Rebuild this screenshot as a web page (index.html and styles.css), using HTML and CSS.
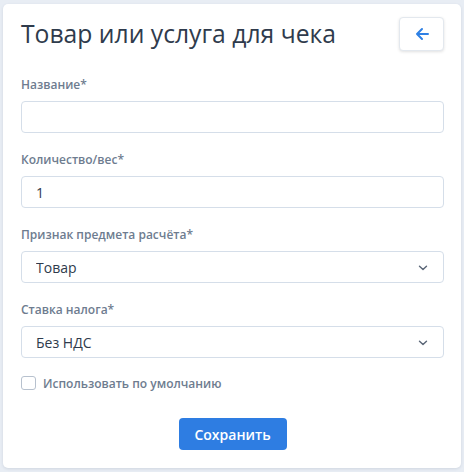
FILE: index.html
```html
<!DOCTYPE html>
<html lang="ru">
  <head>
    <meta charset="UTF-8" />
    <meta name="viewport" content="width=device-width, initial-scale=1.0" />
    <title>Товар или услуга для чека</title>
    <link rel="stylesheet" href="styles.css">
  </head>
  <body>
    <div class="card">
      <div class="card-header">
        <h1>Товар или услуга для чека</h1>
        <button class="back-btn" type="button" aria-label="Назад">
          <svg width="14" height="14" viewBox="0 0 14 14" fill="none" stroke="currentColor" stroke-width="2" stroke-linecap="round" stroke-linejoin="round">
            <path d="M13 7H2M7 2L2 7l5 5" />
          </svg>
        </button>
      </div>

      <div class="field">
        <label for="name">Название*</label>
        <input type="text" id="name" />
      </div>

      <div class="field">
        <label for="qty">Количество/вес*</label>
        <input type="text" id="qty" value="1" />
      </div>

      <div class="field">
        <label for="subject">Признак предмета расчёта*</label>
        <div class="select">
          <select id="subject">
            <option selected>Товар</option>
            <option>Услуга</option>
          </select>
          <svg class="chevron" width="10" height="6" viewBox="0 0 10 6" fill="none" stroke="currentColor" stroke-width="1.4" stroke-linecap="round" stroke-linejoin="round">
            <path d="M1.5 1.2L5 4.6l3.5-3.4" />
          </svg>
        </div>
      </div>

      <div class="field">
        <label for="tax">Ставка налога*</label>
        <div class="select">
          <select id="tax">
            <option selected>Без НДС</option>
            <option>НДС 20%</option>
          </select>
          <svg class="chevron" width="10" height="6" viewBox="0 0 10 6" fill="none" stroke="currentColor" stroke-width="1.4" stroke-linecap="round" stroke-linejoin="round">
            <path d="M1.5 1.2L5 4.6l3.5-3.4" />
          </svg>
        </div>
      </div>

      <label class="check">
        <input type="checkbox" id="default" />
        <span class="box"></span>
        Использовать по умолчанию
      </label>

      <div class="actions">
        <button class="save-btn" type="button">Сохранить</button>
      </div>
    </div>
  </body>
</html>
```

FILE: styles.css
```css
body {
  margin: 0;
  padding: 4px 3px 5px 3px;
  background-color: #e8edf4;
  font-family: "Open Sans", "Noto Sans", sans-serif;
  color: #2f3b4c;
}

.card {
  background-color: white;
  border-radius: 5px;
  box-shadow: 0 1px 3px rgba(40, 60, 90, 0.12);
  padding: 13px 17px 18px 18px;
}

.card-header {
  display: flex;
  align-items: center;
  justify-content: space-between;
  height: 34px;
  margin-bottom: 25px;
}

.card-header h1 {
  margin: 0;
  font-size: 24.7px;
  font-weight: 400;
  line-height: 34px;
  color: #2f3b4c;
}

.back-btn {
  display: flex;
  align-items: center;
  justify-content: center;
  width: 45px;
  height: 34px;
  padding: 0;
  background-color: white;
  color: #2f80e4;
  border: 1px solid #e3e8ee;
  border-radius: 4px;
  box-shadow: 0 1px 3px rgba(0, 0, 0, 0.12);
  cursor: pointer;
}

.field {
  margin-bottom: 18px;
}

.field label {
  display: block;
  font-size: 12px;
  font-weight: 600;
  line-height: 18px;
  color: #6e7c8f;
  margin-bottom: 7px;
}

.field input[type='text'],
.select select {
  display: block;
  width: 100%;
  box-sizing: border-box;
  height: 32px;
  padding: 0 14px;
  border: 1px solid #d5dee9;
  border-radius: 4px;
  background-color: white;
  font-family: inherit;
  font-size: 14px;
  color: #2f3b4c;
  outline: none;
}

.select {
  position: relative;
}

.select select {
  appearance: none;
  -webkit-appearance: none;
}

.chevron {
  position: absolute;
  right: 16px;
  top: 14px;
  color: #5a6677;
  pointer-events: none;
}

.check {
  display: flex;
  align-items: center;
  height: 14px;
  font-size: 12px;
  font-weight: 600;
  color: #6e7c8f;
  cursor: pointer;
}

.check input {
  display: none;
}

.check .box {
  width: 13px;
  height: 12px;
  border: 1px solid #b7c1ce;
  border-radius: 3px;
  margin-right: 7px;
}

.actions {
  display: flex;
  justify-content: center;
  margin-top: 28px;
}

.save-btn {
  width: 108px;
  height: 32px;
  background-color: #2e7de2;
  color: white;
  border: none;
  border-radius: 4px;
  font-family: inherit;
  font-size: 14px;
  font-weight: 600;
  cursor: pointer;
}

.save-btn:hover {
  background-color: #2670d0;
}
```
